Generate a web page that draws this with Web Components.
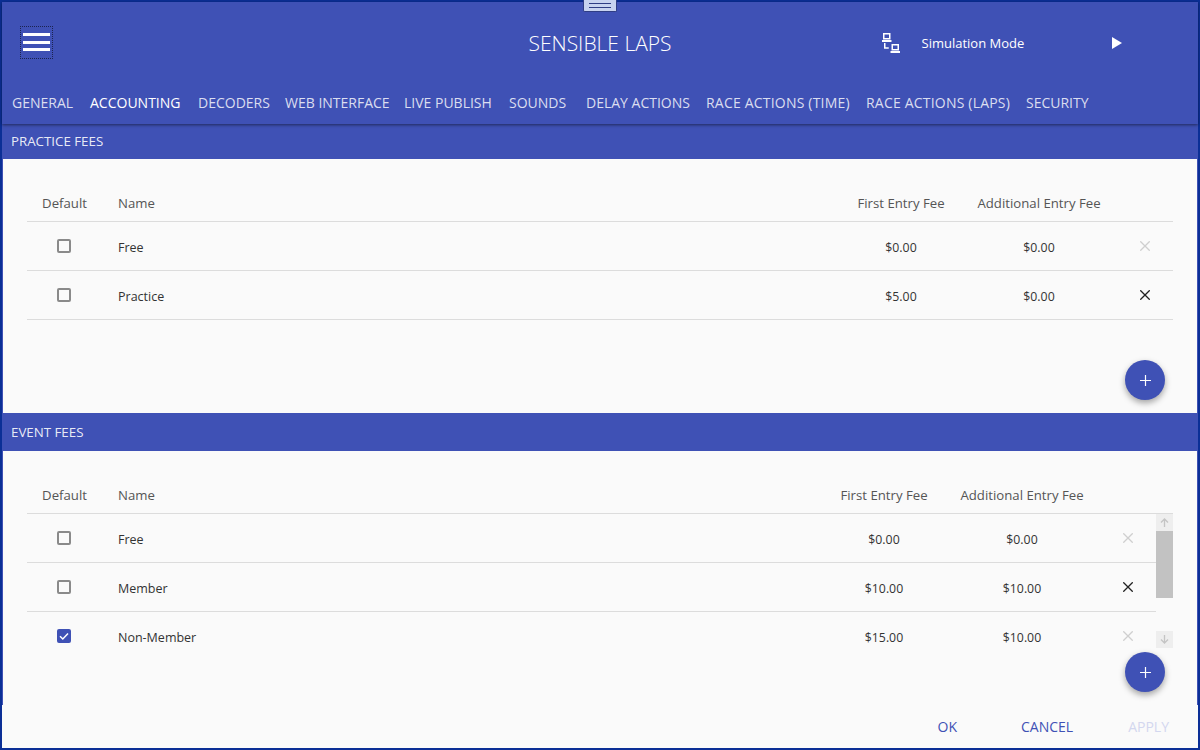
<!DOCTYPE html>
<html>
<head>
<meta charset="utf-8">
<title>Sensible Laps</title>
<style>
    html, body { margin: 0; padding: 0; }
    body { width: 1200px; height: 750px; overflow: hidden; font-family: "Open Sans", "Noto Sans", sans-serif; }
</style>
</head>
<body>
<sl-window>
    <sl-header slot="header" title="SENSIBLE LAPS" mode="Simulation Mode"></sl-header>
    <sl-tabs slot="header" active="ACCOUNTING" tabs="GENERAL|ACCOUNTING|DECODERS|WEB INTERFACE|LIVE PUBLISH|SOUNDS|DELAY ACTIONS|RACE ACTIONS (TIME)|RACE ACTIONS (LAPS)|SECURITY"></sl-tabs>

    <fee-section title="PRACTICE FEES">
        <fee-row name="Free" first="$0.00" extra="$0.00" locked></fee-row>
        <fee-row name="Practice" first="$5.00" extra="$0.00"></fee-row>
    </fee-section>

    <fee-section title="EVENT FEES" scrolling>
        <fee-row name="Free" first="$0.00" extra="$0.00" locked></fee-row>
        <fee-row name="Member" first="$10.00" extra="$10.00"></fee-row>
        <fee-row name="Non-Member" first="$15.00" extra="$10.00" checked locked></fee-row>
    </fee-section>

    <sl-footer slot="footer"></sl-footer>
</sl-window>

<script>
class SlWindow extends HTMLElement {
    constructor() {
        super();
        const shadow = this.attachShadow({ mode: 'open' });
        shadow.innerHTML = `
            <style>
                :host {
                    display: flex;
                    flex-direction: column;
                    position: relative;
                    box-sizing: border-box;
                    width: 1200px;
                    height: 750px;
                    border: 2px solid #0b2f96;
                    background: #fafafa;
                }
                .top {
                    display: block;
                    background: #3f51b5;
                    box-shadow: 0 1px 3px rgba(0, 0, 0, .5);
                    position: relative;
                    z-index: 2;
                }
                .body {
                    display: flex;
                    flex-direction: column;
                    border-left: 1px solid #3f51b5;
                    border-right: 1px solid #3f51b5;
                }
                .grip {
                    position: absolute;
                    top: -2px;
                    left: 581px;
                    width: 34px;
                    height: 12px;
                    box-sizing: border-box;
                    background: #c8d3f0;
                    border: 1px solid #2f3d85;
                    border-top: none;
                    border-radius: 0 0 2px 2px;
                    z-index: 3;
                }
                .grip::before {
                    content: "";
                    position: absolute;
                    left: 5px;
                    right: 5px;
                    top: 3px;
                    height: 3px;
                    border-top: 1px solid #2f3d85;
                    border-bottom: 1px solid #2f3d85;
                }
            </style>
            <div class="grip"></div>
            <div class="top"><slot name="header"></slot></div>
            <div class="body"><slot></slot></div>
            <slot name="footer"></slot>
        `;
    }
}

class SlHeader extends HTMLElement {
    constructor() {
        super();
        const shadow = this.attachShadow({ mode: 'open' });
        shadow.innerHTML = `
            <style>
                :host {
                    display: grid;
                    grid-template-columns: 1fr auto 1fr;
                    align-items: center;
                    height: 82px;
                    color: #fff;
                }
                .menu {
                    display: flex;
                    flex-direction: column;
                    justify-content: center;
                    gap: 4.5px;
                    box-sizing: border-box;
                    width: 33px;
                    height: 33px;
                    margin: 0 0 0 18px;
                    padding: 0 2px;
                    border: 1px dotted #1b2350;
                    position: relative;
                    top: -1px;
                }
                .menu i { display: block; height: 3px; background: #fff; }
                h1 {
                    margin: 0;
                    font-size: 21px;
                    font-weight: 300;
                }
                .right {
                    display: flex;
                    align-items: center;
                    padding-left: 210px;
                }
                .right svg { display: block; flex: none; }
                .mode { width: 190px; margin-left: 22px; font-size: 13px; }
            </style>
            <div><div class="menu"><i></i><i></i><i></i></div></div>
            <h1>${this.getAttribute('title')}</h1>
            <div class="right">
                <svg width="18" height="20" viewBox="0 0 18 20" fill="none" stroke="#fff" stroke-width="1.5">
                    <rect x="1.75" y=".75" width="6" height="5"/>
                    <path d="M0 8h9.5" stroke-width="2"/>
                    <path d="M2.75 10v5h4"/>
                    <rect x="10.25" y="11.75" width="6" height="5"/>
                    <path d="M8.5 19h9.5" stroke-width="2"/>
                </svg>
                <span class="mode">${this.getAttribute('mode')}</span>
                <svg width="10" height="12" viewBox="0 0 10 12"><path d="M0 0L10 6L0 12Z" fill="#fff"/></svg>
            </div>
        `;
    }
}

class SlTabs extends HTMLElement {
    constructor() {
        super();
        const shadow = this.attachShadow({ mode: 'open' });
        const active = this.getAttribute('active');
        const tabs = this.getAttribute('tabs').split('|').map(t =>
            `<span class="${t === active ? 'on' : ''} ${t.includes('(') ? 'wide' : ''}">${t}</span>`).join('');
        shadow.innerHTML = `
            <style>
                :host {
                    display: grid;
                    grid-template-columns: 78px 108px 87px 119px 105px 77px 120px 160px 160px auto;
                    align-items: center;
                    height: 40px;
                    padding: 0 0 4px 10px;
                    box-sizing: border-box;
                    font-size: 14px;
                    color: rgba(255, 255, 255, .82);
                    white-space: nowrap;
                }
                .on { color: #fff; }
                .wide { letter-spacing: .2px; }
            </style>
            ${tabs}
        `;
    }
}

class FeeSection extends HTMLElement {
    constructor() {
        super();
        const shadow = this.attachShadow({ mode: 'open' });
        const scrolling = this.hasAttribute('scrolling');
        shadow.innerHTML = `
            <style>
                :host { display: block; position: relative; }
                .bar {
                    display: flex;
                    align-items: center;
                    box-sizing: border-box;
                    height: ${scrolling ? 38 : 35}px;
                    padding: 0 8px ${scrolling ? 0 : 1}px;
                    background: #3f51b5;
                    color: rgba(255, 255, 255, .9);
                    font-size: 13.3px;
                }
                .panel {
                    box-sizing: border-box;
                    height: 254px;
                    padding: 20px 24px 0;
                    background: #fafafa;
                }
                .cols {
                    display: grid;
                    grid-template-columns: 75px 1fr 138px 138px 65px;
                    align-items: center;
                    box-sizing: border-box;
                    height: 43px;
                    padding: 6px ${scrolling ? 17 : 0}px 0 0;
                    border-bottom: 1px solid #dcdcdc;
                    font-size: 13.2px;
                    color: #555;
                }
                .cols span { text-align: center; }
                .cols .name { text-align: left; padding-left: 16px; }
                .wrap { display: flex; height: 135px; }
                .rows { flex: 1; min-width: 0; overflow: hidden; }
                .scroll {
                    flex: none;
                    width: 17px;
                    display: flex;
                    flex-direction: column;
                    justify-content: space-between;
                    height: 134px;
                    position: relative;
                }
                .scroll b {
                    display: flex;
                    align-items: center;
                    justify-content: center;
                    height: 17px;
                    background: #eee;
                }
                .scroll .thumb {
                    position: absolute;
                    left: 0;
                    right: 0;
                    top: 17px;
                    height: 67px;
                    background: #c2c2c2;
                }
                .add {
                    position: absolute;
                    right: 32px;
                    bottom: 13px;
                    width: 40px;
                    height: 40px;
                    border-radius: 50%;
                    background: #3f51b5;
                    box-shadow: 0 3px 6px rgba(0, 0, 0, .35);
                    display: flex;
                    align-items: center;
                    justify-content: center;
                }
                .add svg { display: block; }
            </style>
            <div class="bar">${this.getAttribute('title')}</div>
            <div class="panel">
                <div class="cols">
                    <span>Default</span>
                    <span class="name">Name</span>
                    <span>First Entry Fee</span>
                    <span>Additional Entry Fee</span>
                    <span></span>
                </div>
                <div class="wrap">
                    <div class="rows"><slot></slot></div>
                    ${scrolling ? `
                    <div class="scroll">
                        <b><svg width="9" height="9" viewBox="0 0 9 9" fill="none" stroke="#c4c4c4" stroke-width="1.3"><path d="M4.5 9V1M1 4.5L4.5 1L8 4.5"/></svg></b>
                        <div class="thumb"></div>
                        <b><svg width="9" height="9" viewBox="0 0 9 9" fill="none" stroke="#c4c4c4" stroke-width="1.3"><path d="M4.5 0V8M1 4.5L4.5 8L8 4.5"/></svg></b>
                    </div>` : ''}
                </div>
            </div>
            <div class="add"><svg width="11" height="11" viewBox="0 0 11 11" stroke="#fff" stroke-width="1.2"><path d="M5.5 0V11M0 5.5H11"/></svg></div>
        `;
    }
}

class FeeRow extends HTMLElement {
    constructor() {
        super();
        const shadow = this.attachShadow({ mode: 'open' });
        const checked = this.hasAttribute('checked');
        const locked = this.hasAttribute('locked');
        shadow.innerHTML = `
            <style>
                :host {
                    display: grid;
                    grid-template-columns: 75px 1fr 138px 138px 65px;
                    align-items: center;
                    height: 49px;
                    padding-top: 2px;
                    box-sizing: border-box;
                    border-bottom: 1px solid #dcdcdc;
                    font-size: 12.3px;
                    color: #333;
                }
                .c { text-align: center; }
                .name { padding-left: 16px; font-size: 12.5px; }
                .box {
                    box-sizing: border-box;
                    width: 14px;
                    height: 14px;
                    margin: -3px 0 0 30px;
                    border: 2px solid #8a8a8a;
                    border-radius: 2px;
                }
                .box.on {
                    background: #3f51b5;
                    border-color: #3f51b5;
                    position: relative;
                }
                .box svg { display: block; position: absolute; left: -2px; top: -2px; }
                .x { display: block; margin: -3px 0 0 32px; }
            </style>
            <div class="box ${checked ? 'on' : ''}">${checked ? '<svg width="14" height="14" viewBox="0 0 14 14" fill="none" stroke="#fff" stroke-width="1.5"><path d="M3 7.2L5.8 10L11 4.5"/></svg>' : ''}</div>
            <div class="name">${this.getAttribute('name')}</div>
            <div class="c">${this.getAttribute('first')}</div>
            <div class="c">${this.getAttribute('extra')}</div>
            <svg class="x" width="10" height="10" viewBox="0 0 10 10" fill="none" stroke="${locked ? '#cfcfcf' : '#222'}" stroke-width="1.3"><path d="M.3 .3L9.7 9.7M9.7 .3L.3 9.7"/></svg>
        `;
    }
}

class SlFooter extends HTMLElement {
    constructor() {
        super();
        const shadow = this.attachShadow({ mode: 'open' });
        shadow.innerHTML = `
            <style>
                :host {
                    display: flex;
                    align-items: center;
                    justify-content: flex-end;
                    flex: 1;
                    gap: 55px;
                    padding: 0 29px 0 0;
                    background: #fafafa;
                    color: #3f51b5;
                    font-size: 14px;
                }
                .ok { margin-right: 9px; }
                .off { color: #d3d7ef; }
            </style>
            <span class="ok">OK</span>
            <span>CANCEL</span>
            <span class="off">APPLY</span>
        `;
    }
}

customElements.define('sl-window', SlWindow);
customElements.define('sl-header', SlHeader);
customElements.define('sl-tabs', SlTabs);
customElements.define('fee-section', FeeSection);
customElements.define('fee-row', FeeRow);
customElements.define('sl-footer', SlFooter);
</script>
</body>
</html>
